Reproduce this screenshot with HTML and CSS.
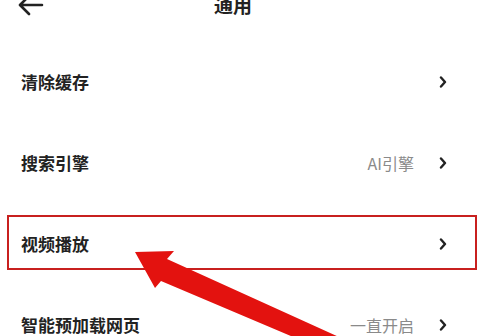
FILE: index.html
```html
<!DOCTYPE html>
<html lang="zh-CN">
<head>
    <meta charset="UTF-8">
    <meta name="viewport" content="width=device-width, initial-scale=1.0">
    <title>通用</title>
    <link rel="stylesheet" href="styles.css">
</head>
<body>
    <div class="page">
        <div class="topbar">
            <svg class="back" width="28" height="24" viewBox="0 0 28 24">
                <path d="M26 12H5M13 3L4 12L13 21" fill="none" stroke="#222" stroke-width="2.6" stroke-linecap="round" stroke-linejoin="round"/>
            </svg>
            <div class="title">通用</div>
        </div>

        <div class="list">
            <div class="row">
                <span class="label">清除缓存</span>
                <span class="right">
                    <svg class="chev" width="8" height="12" viewBox="0 0 8 12"><path d="M2 1.5L6 6L2 10.5" fill="none" stroke="#222" stroke-width="2.4" stroke-linecap="round" stroke-linejoin="round"/></svg>
                </span>
            </div>
            <div class="row">
                <span class="label">搜索引擎</span>
                <span class="right">
                    <span class="value">AI引擎</span>
                    <svg class="chev" width="8" height="12" viewBox="0 0 8 12"><path d="M2 1.5L6 6L2 10.5" fill="none" stroke="#222" stroke-width="2.4" stroke-linecap="round" stroke-linejoin="round"/></svg>
                </span>
            </div>
            <div class="row marked">
                <span class="label">视频播放</span>
                <span class="right">
                    <svg class="chev" width="8" height="12" viewBox="0 0 8 12"><path d="M2 1.5L6 6L2 10.5" fill="none" stroke="#222" stroke-width="2.4" stroke-linecap="round" stroke-linejoin="round"/></svg>
                </span>
                <div class="highlight"></div>
            </div>
            <div class="row">
                <span class="label">智能预加载网页</span>
                <span class="right">
                    <span class="value">一直开启</span>
                    <svg class="chev" width="8" height="12" viewBox="0 0 8 12"><path d="M2 1.5L6 6L2 10.5" fill="none" stroke="#222" stroke-width="2.4" stroke-linecap="round" stroke-linejoin="round"/></svg>
                </span>
            </div>
        </div>

        <!-- annotation arrow -->
        <svg class="pointer" width="484" height="336" viewBox="0 0 484 336">
            <polygon points="135,252 174,251 167,259 350,342 305,342 161,281 155,288" fill="#e3120f"/>
        </svg>
    </div>
</body>
</html>
```

FILE: styles.css
```css
body {
    margin: 0;
    background-color: #fff;
    font-family: "Noto Sans CJK SC", "Noto Sans", sans-serif;
    color: #222;
    overflow: hidden;
}
.page {
    position: relative;
    width: 484px;
    height: 336px;
    overflow: hidden;
}
.topbar {
    display: flex;
    align-items: center;
    height: 24px;
    margin-top: -7px;
    padding-left: 16px;
}
.back {
    display: block;
}
.title {
    margin-left: 170px;
    font-size: 19px;
    font-weight: 700;
    line-height: 24px;
}
.list {
    margin-top: 24px;
}
.row {
    position: relative;
    display: flex;
    align-items: center;
    justify-content: space-between;
    height: 81px;
    padding: 0 37px 0 21px;
}
.label {
    font-size: 17px;
    font-weight: 700;
    color: #222;
}
.right {
    display: flex;
    align-items: center;
    gap: 25px;
}
.value {
    font-size: 16px;
    color: #8a8a8a;
}
.chev {
    display: block;
}
.highlight {
    position: absolute;
    top: 12px;
    bottom: 14px;
    left: 7px;
    right: 7px;
    border: 2.5px solid #c8201f;
}
.pointer {
    position: absolute;
    top: 0;
    left: 0;
}
```
